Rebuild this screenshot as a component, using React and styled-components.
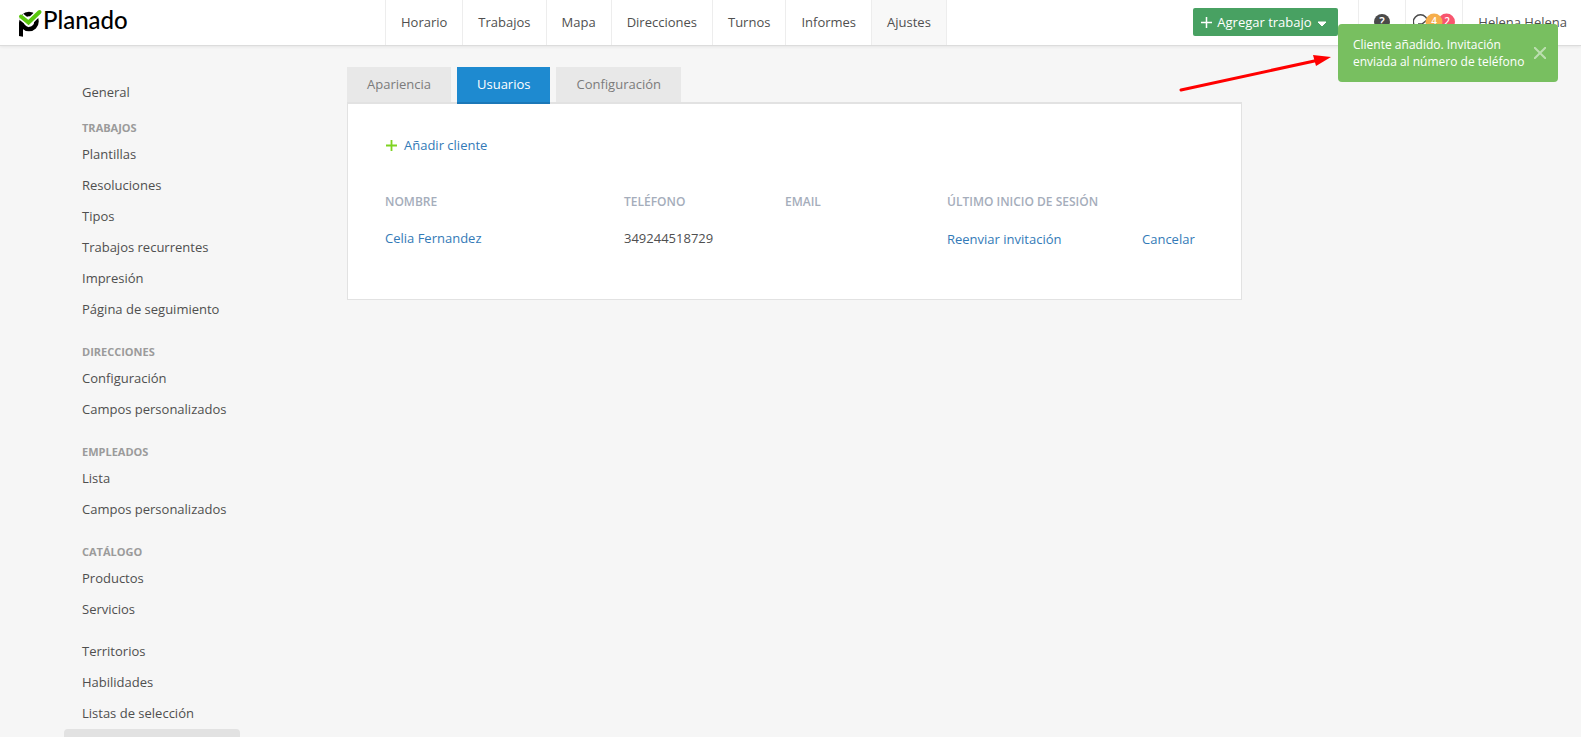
import React from 'react';
import styled, { createGlobalStyle, css } from 'styled-components';

const GlobalStyle = createGlobalStyle`
  *, *::before, *::after { box-sizing: border-box; }
  body {
    margin: 0;
    background: #f6f6f6;
    color: #4f4f4f;
    font-family: 'Open Sans', 'Noto Sans', sans-serif;
    font-size: 13px;
    line-height: 18px;
  }
  a { color: inherit; text-decoration: none; }
  ul { list-style: none; margin: 0; padding: 0; }
  button { font: inherit; border: 0; padding: 0; background: none; cursor: pointer; }
`;

const Page = styled.div`
  display: flex;
  flex-direction: column;
  height: 100vh;
  overflow: hidden;
`;

const TopBar = styled.header`
  display: flex;
  flex: none;
  height: 46px;
  background: #fff;
  border-bottom: 1px solid #dcdcdc;
  box-shadow: 0 1px 3px rgba(0, 0, 0, 0.07);
`;

const Brand = styled.a`
  display: flex;
  align-items: center;
  width: 385px;
  padding-left: 18px;
`;

const MainNav = styled.nav`
  display: flex;
  flex: 1;
  border-left: 1px solid #ededed;
`;

const NavLink = styled.a`
  display: flex;
  align-items: center;
  padding: 0 15px 2px;
  border-right: 1px solid #ededed;
  background: ${(p) => (p.$active ? '#f8f8f8' : 'transparent')};
`;

const Tools = styled.div`
  display: flex;
`;

const AddJob = styled.button`
  display: flex;
  align-items: center;
  gap: 5px;
  width: 145px;
  height: 28px;
  margin: 8px 20px 0 0;
  padding-left: 7px;
  border-radius: 2px;
  background: #48a162;
  color: #fff;
`;

const ToolCell = styled.div`
  display: flex;
  align-items: center;
  justify-content: center;
  width: ${(p) => p.$width}px;
  padding-bottom: 2px;
  border-left: 1px solid #ededed;
`;

const UserLink = styled.a`
  display: flex;
  align-items: center;
  padding: 0 14px 2px 15px;
  border-left: 1px solid #ededed;
`;

const Columns = styled.div`
  display: flex;
  gap: 107px;
  padding: 0 64px;
`;

const Sidebar = styled.nav`
  flex: none;
  width: 176px;
  padding-top: 31px;
`;

const SideGroup = styled.section`
  margin-top: ${(p) => p.$gap}px;
`;

const SideHeading = styled.h2`
  margin: 0;
  padding-left: 18px;
  font-size: 11px;
  font-weight: 700;
  line-height: 22px;
  text-transform: uppercase;
  color: #9b9b9b;
`;

const SideLink = styled.a`
  display: block;
  height: 31px;
  padding-left: 18px;
  line-height: 30px;
  white-space: nowrap;
  ${(p) => p.$active && css`
    border-radius: 4px;
    background: #e2e2e2;
  `}
`;

const Content = styled.main`
  flex: 1;
  max-width: 895px;
  padding-top: 21px;
`;

const Tabs = styled.div`
  display: flex;
  gap: 6px;
`;

const Tab = styled.button`
  height: 37px;
  margin-bottom: -2px;
  padding: 0 20px 2px;
  color: ${(p) => (p.$active ? '#fff' : '#7b7b7b')};
  background: ${(p) => (p.$active ? '#1e8ad0' : '#e8e8e8')};
  border-bottom: 2px solid ${(p) => (p.$active ? '#1b78b8' : '#e2e2e2')};
`;

const Panel = styled.section`
  padding: 32px 37px 43px;
  background: #fff;
  border: 1px solid #e2e2e2;
  border-top-width: 2px;
`;

const AddClient = styled.a`
  display: inline-flex;
  align-items: center;
  gap: 7px;
  color: #337ab7;
`;

const Table = styled.table`
  width: 100%;
  margin-top: 28px;
  border-collapse: collapse;
  table-layout: fixed;
  th, td {
    padding: 0;
    text-align: left;
    vertical-align: middle;
    white-space: nowrap;
  }
  th {
    height: 37px;
    font-size: 12px;
    font-weight: 600;
    text-transform: uppercase;
    color: #a5adbb;
  }
  td { height: 36px; }
  a { color: #337ab7; }
`;

const Col = styled.col`
  width: ${(p) => (p.$width ? `${p.$width}px` : 'auto')};
`;

const RowButton = styled.button`
  padding-top: 2px;
  color: #337ab7;
`;

const Toast = styled.div`
  position: absolute;
  top: 24px;
  right: 23px;
  display: flex;
  align-items: center;
  justify-content: space-between;
  width: 220px;
  height: 58px;
  padding: 0 12px 0 15px;
  border-radius: 4px;
  background: #78bf60;
  color: #fff;
  font-size: 12px;
  font-weight: 500;
  line-height: 17px;
  p { margin: 0; white-space: nowrap; }
`;

const CloseButton = styled.button`
  display: flex;
`;

const Pointer = styled.svg`
  position: absolute;
  top: 50px;
  right: 248px;
  pointer-events: none;
`;

const WordMark = styled.text`
  font-family: 'Lato', sans-serif;
  font-size: 24px;
  font-weight: 500;
`;

const BadgeText = styled.text`
  font-size: ${(p) => p.$size || 10}px;
  font-weight: 600;
  fill: #fff;
  text-anchor: middle;
`;

const Logo = () => (
  <svg width="114" height="34" viewBox="0 0 114 34" role="img" aria-label="Planado">
    <circle cx="11" cy="15.500" r="7.500" fill="none" stroke="#000" strokeWidth="4.500" />
    <path d="M1 15v15l4 .8V21z" fill="#000" />
    <path d="M3 10.500l7.500 6L21.500 6" fill="none" stroke="#fff" strokeWidth="7" />
    <path d="M3 10.500l7.500 6L21.500 6" fill="none" stroke="#5ac80e" strokeWidth="4" strokeLinecap="round" />
    <WordMark x="25" y="23">Planado</WordMark>
  </svg>
);

const Plus = ({ color, weight }) => (
  <svg width="12" height="12" viewBox="0 0 12 12" aria-hidden="true">
    <path d="M6.500 1v11M1 6.500h11" stroke={color} strokeWidth={weight} />
  </svg>
);

const navItems = ['Horario', 'Trabajos', 'Mapa', 'Direcciones', 'Turnos', 'Informes', 'Ajustes'];

const sideGroups = [
  { gap: 0, links: ['General'] },
  { gap: 9, title: 'Trabajos', links: ['Plantillas', 'Resoluciones', 'Tipos', 'Trabajos recurrentes', 'Impresión', 'Página de seguimiento'] },
  { gap: 16, title: 'Direcciones', links: ['Configuración', 'Campos personalizados'] },
  { gap: 16, title: 'Empleados', links: ['Lista', 'Campos personalizados'] },
  { gap: 16, title: 'Catálogo', links: ['Productos', 'Servicios'] },
  { gap: 11, links: ['Territorios', 'Habilidades', 'Listas de selección', ''] },
];

const tabs = ['Apariencia', 'Usuarios', 'Configuración'];

export default function App() {
  return (
    <Page>
      <GlobalStyle />
      <TopBar>
        <Brand href="#"><Logo /></Brand>
        <MainNav>
          {navItems.map((item) => (
            <NavLink key={item} href="#" $active={item === 'Ajustes'}>{item}</NavLink>
          ))}
        </MainNav>
        <Tools>
          <AddJob type="button">
            <Plus color="#fff" weight={1.5} />
            Agregar trabajo
            <svg width="10" height="10" viewBox="0 0 10 10" aria-hidden="true"><path d="M1 5h8L5 9z" fill="#fff" stroke="#fff" strokeLinejoin="round" /></svg>
          </AddJob>
          <ToolCell $width={47}>
            <svg width="16" height="16" viewBox="0 0 16 16">
              <circle cx="8" cy="8" r="8" fill="#4a4a4a" />
              <BadgeText x="8" y="12" $size={12}>?</BadgeText>
            </svg>
          </ToolCell>
          <ToolCell $width={57}>
            <svg width="43" height="18" viewBox="0 0 43 18">
              <circle cx="7.500" cy="9" r="7.200" fill="none" stroke="#4a4a4a" strokeWidth="1.500" />
              <path d="M5 11h4l5-4" fill="none" stroke="#4a4a4a" strokeWidth="1.500" />
              <circle cx="33.500" cy="9" r="8.500" fill="#f8566f" />
              <circle cx="21" cy="9" r="8.500" fill="#f6ae4b" />
              <BadgeText x="21" y="12">4</BadgeText>
              <BadgeText x="34" y="12">2</BadgeText>
            </svg>
          </ToolCell>
          <UserLink href="#">Helena Helena</UserLink>
        </Tools>
      </TopBar>
      <Columns>
        <Sidebar>
          {sideGroups.map((group, i) => (
            <SideGroup key={i} $gap={group.gap}>
              {group.title && <SideHeading>{group.title}</SideHeading>}
              <ul>
                {group.links.map((link) => (
                  <li key={link}><SideLink href="#" $active={!link}>{link}</SideLink></li>
                ))}
              </ul>
            </SideGroup>
          ))}
        </Sidebar>
        <Content>
          <Tabs>
            {tabs.map((tab) => (
              <Tab key={tab} type="button" $active={tab === 'Usuarios'}>{tab}</Tab>
            ))}
          </Tabs>
          <Panel>
            <AddClient href="#"><Plus color="#7ed321" weight={1.8} />Añadir cliente</AddClient>
            <Table>
              <colgroup>
                <Col $width={239} />
                <Col $width={161} />
                <Col $width={162} />
                <Col $width={195} />
                <Col />
              </colgroup>
              <thead>
                <tr><th>Nombre</th><th>Teléfono</th><th>Email</th><th>Último inicio de sesión</th><th /></tr>
              </thead>
              <tbody>
                <tr>
                  <td><a href="#">Celia Fernandez</a></td>
                  <td>349244518729</td>
                  <td />
                  <td><RowButton type="button">Reenviar invitación</RowButton></td>
                  <td><RowButton type="button">Cancelar</RowButton></td>
                </tr>
              </tbody>
            </Table>
          </Panel>
        </Content>
      </Columns>
      <Toast role="status">
        <p>Cliente añadido. Invitación<br />enviada al número de teléfono</p>
        <CloseButton type="button" aria-label="Cerrar">
          <svg width="12" height="12" viewBox="0 0 12 12"><path d="M0 0l12 12M12 0L0 12" stroke="#bcdfb0" strokeWidth="2" /></svg>
        </CloseButton>
      </Toast>
      <Pointer width="154" height="44" viewBox="0 0 154 44" aria-hidden="true">
        <path d="M2 40L140 10" stroke="#f00" strokeWidth="3" strokeLinecap="round" />
        <path d="M152 7L134 5L137 16z" fill="#f00" />
      </Pointer>
    </Page>
  );
}
